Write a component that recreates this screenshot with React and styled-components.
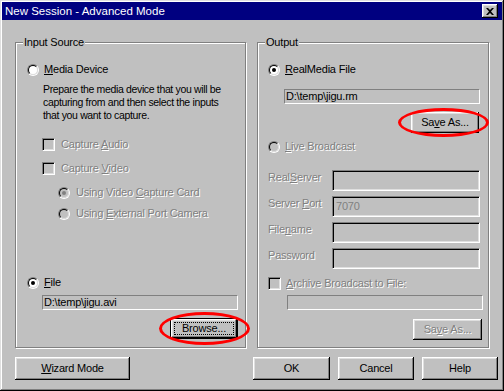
import React from "react";
import styled, { createGlobalStyle } from "styled-components";

const GlobalStyle = createGlobalStyle`
  html, body {
    margin: 0;
    padding: 0;
    background: #c0c0c0;
  }
  body {
    font-family: "Liberation Sans", Arial, sans-serif;
    font-size: 11px;
    letter-spacing: -0.2px;
  }
`;

const Window = styled.div`
  width: 504px;
  height: 391px;
  box-sizing: border-box;
  padding: 2px;
  background: #c0c0c0;
  color: #000;
  display: flex;
  flex-direction: column;
  box-shadow: inset -1px -1px #000, inset 1px 1px #dfdfdf,
    inset -2px -2px #808080, inset 2px 2px #fff;
`;

const TitleBar = styled.div`
  height: 18px;
  background: #000080;
  color: #fff;
  display: flex;
  align-items: center;
  justify-content: space-between;
  padding: 0 4px 0 3px;
  font-size: 11.5px;
  letter-spacing: 0;
`;

const CloseButton = styled.div`
  width: 16px;
  height: 14px;
  box-sizing: border-box;
  background: #c0c0c0;
  display: flex;
  align-items: center;
  justify-content: center;
  box-shadow: inset -1px -1px #000, inset 1px 1px #fff,
    inset -2px -2px #808080, inset 2px 2px #dfdfdf;
`;

const Content = styled.div`
  display: flex;
  gap: 11px;
  padding: 22px 0 0 13px;
`;

const Group = styled.div`
  position: relative;
  box-sizing: border-box;
  width: ${(p) => p.$w}px;
  height: 306px;
  border: 1px solid #808080;
  box-shadow: inset 1px 1px #fff, 1px 1px #fff;
  display: flex;
  flex-direction: column;
  padding: 0 ${(p) => p.$pr}px 0 ${(p) => p.$pl}px;
`;

const Legend = styled.span`
  position: absolute;
  top: -7px;
  left: 7px;
  padding: 0 1px;
  line-height: 13px;
  background: #c0c0c0;
`;

const OptionRow = styled.div`
  display: flex;
  align-items: center;
  gap: ${(p) => p.$gap ?? 5}px;
  height: 13px;
  line-height: 13px;
  white-space: nowrap;
  margin-top: ${(p) => p.$top}px;
  margin-left: ${(p) => p.$indent || 0}px;
`;

const Label = styled.span`
  color: ${(p) => (p.$disabled ? "#808080" : "#000")};
  text-shadow: ${(p) => (p.$disabled ? "1px 1px 0 #fff" : "none")};
`;

const Description = styled.p`
  margin: 7px 0 0 16px;
  line-height: 13px;
  font-size: 10.5px;
  letter-spacing: -0.35px;
  white-space: nowrap;
`;

const RadioOuter = styled.span`
  width: 12px;
  height: 12px;
  flex-shrink: 0;
  box-sizing: border-box;
  border-radius: 50%;
  border: 1px solid;
  border-color: #808080 #fff #fff #808080;
  display: flex;
`;

const RadioInner = styled.span`
  flex: 1;
  box-sizing: border-box;
  border-radius: 50%;
  border: 1px solid;
  border-color: #000 #dfdfdf #dfdfdf #000;
  background: ${(p) => (p.$disabled ? "#c0c0c0" : "#fff")};
  display: flex;
  align-items: center;
  justify-content: center;
`;

const RadioDot = styled.span`
  width: 4px;
  height: 4px;
  border-radius: 50%;
  background: ${(p) => (p.$disabled ? "#808080" : "#000")};
`;

const CheckBox = styled.span`
  width: 13px;
  height: 13px;
  flex-shrink: 0;
  box-sizing: border-box;
  border: 1px solid;
  border-color: #808080 #fff #fff #808080;
  box-shadow: inset 1px 1px #000, inset -1px -1px #dfdfdf;
  background: ${(p) => (p.$disabled ? "#c0c0c0" : "#fff")};
`;

const FlatField = styled.div`
  height: 15px;
  box-sizing: border-box;
  border: 1px solid;
  border-color: #808080 #fff #fff #808080;
  background: #c0c0c0;
  padding-left: 1px;
  line-height: 13px;
  white-space: nowrap;
  margin: ${(p) => p.$top}px ${(p) => p.$right || 0}px 0
    ${(p) => p.$indent || 0}px;
`;

const FieldRow = styled.div`
  display: flex;
  align-items: flex-start;
  height: 21px;
  margin-top: ${(p) => p.$top}px;
  margin-right: 3px;
`;

const FieldLabel = styled(Label)`
  width: 64px;
  flex-shrink: 0;
  padding-top: 1px;
  line-height: 13px;
  white-space: nowrap;
`;

const SunkenField = styled.div`
  flex: 1;
  height: 21px;
  box-sizing: border-box;
  border: 1px solid;
  border-color: #808080 #fff #fff #808080;
  box-shadow: inset 1px 1px #000, inset -1px -1px #dfdfdf;
  background: #c0c0c0;
  color: #808080;
  padding: 3px 0 0 3px;
  line-height: 13px;
`;

const ButtonSlot = styled.div`
  position: relative;
  align-self: flex-end;
  margin-top: ${(p) => p.$top}px;
  margin-right: ${(p) => p.$right || 0}px;
`;

const Button = styled.button`
  width: ${(p) => p.$w}px;
  height: ${(p) => p.$h || 23}px;
  box-sizing: border-box;
  margin: 0;
  padding: ${(p) => (p.$focused ? "3px" : "0")};
  font: inherit;
  letter-spacing: inherit;
  line-height: 13px;
  background: #c0c0c0;
  color: ${(p) => (p.disabled ? "#808080" : "#000")};
  text-shadow: ${(p) => (p.disabled ? "1px 1px 0 #fff" : "none")};
  border: ${(p) => (p.$focused ? "1px solid #000" : "none")};
  display: flex;
  align-items: center;
  justify-content: center;
  box-shadow: inset -1px -1px #000, inset 1px 1px #fff,
    inset -2px -2px #808080, inset 2px 2px #dfdfdf;
`;

const FocusRect = styled.span`
  flex: 1;
  align-self: stretch;
  display: flex;
  align-items: center;
  justify-content: center;
  border: 1px dotted #000;
`;

const Ellipse = styled.span`
  position: absolute;
  z-index: 2;
  top: ${(p) => p.$t}px;
  bottom: ${(p) => p.$b}px;
  left: ${(p) => p.$l}px;
  right: ${(p) => p.$r}px;
  border: 3px solid #ff0000;
  border-radius: 50%;
  pointer-events: none;
`;

const ButtonBar = styled.div`
  display: flex;
  justify-content: space-between;
  padding: 9px 4px 0 13px;
`;

const ButtonCluster = styled.div`
  display: flex;
  gap: 8px;
`;

function Radio({ checked, disabled }) {
  return (
    <RadioOuter>
      <RadioInner $disabled={disabled}>
        {checked && <RadioDot $disabled={disabled} />}
      </RadioInner>
    </RadioOuter>
  );
}

function App() {
  return (
    <>
      <GlobalStyle />
      <Window>
        <TitleBar>
          <span>New Session - Advanced Mode</span>
          <CloseButton>
            <svg width="8" height="7" viewBox="0 0 8 7">
              <path
                d="M0 0h2l2 2 2-2h2L5 3.5 8 7H6L4 5 2 7H0l3-3.5z"
                fill="#000"
              />
            </svg>
          </CloseButton>
        </TitleBar>

        <Content>
          <Group $w={231} $pl={11} $pr={7}>
            <Legend>Input Source</Legend>
            <OptionRow $top={20}>
              <Radio />
              <Label>
                <u>M</u>edia Device
              </Label>
            </OptionRow>
            <Description>
              Prepare the media device that you will be
              <br />
              capturing from and then select the inputs
              <br />
              that you want to capture.
            </Description>
            <OptionRow $top={16} $indent={15} $gap={6}>
              <CheckBox $disabled />
              <Label $disabled>
                Capture <u>A</u>udio
              </Label>
            </OptionRow>
            <OptionRow $top={11} $indent={15} $gap={6}>
              <CheckBox $disabled />
              <Label $disabled>
                Capture <u>V</u>ideo
              </Label>
            </OptionRow>
            <OptionRow $top={11} $indent={31} $gap={6}>
              <Radio checked disabled />
              <Label $disabled>
                Using Video <u>C</u>apture Card
              </Label>
            </OptionRow>
            <OptionRow $top={8} $indent={31} $gap={6}>
              <Radio disabled />
              <Label $disabled>
                Using <u>E</u>xternal Port Camera
              </Label>
            </OptionRow>
            <OptionRow $top={56}>
              <Radio checked />
              <Label>
                <u>F</u>ile
              </Label>
            </OptionRow>
            <FlatField $top={6} $indent={15}>
              D:\temp\jigu.avi
            </FlatField>
            <ButtonSlot $top={8}>
              <Button $w={68} $h={21} $focused>
                <FocusRect>Browse...</FocusRect>
              </Button>
              <Ellipse $t={-6} $b={-6} $l={-11} $r={-12} />
            </ButtonSlot>
          </Group>

          <Group $w={232} $pl={10} $pr={5}>
            <Legend>Output</Legend>
            <OptionRow $top={20}>
              <Radio checked />
              <Label>
                <u>R</u>ealMedia File
              </Label>
            </OptionRow>
            <FlatField $top={13} $indent={16} $right={3}>
              D:\temp\jigu.rm
            </FlatField>
            <ButtonSlot $top={8} $right={4}>
              <Button $w={68} $h={21}>
                Sa<u>v</u>e As...
              </Button>
              <Ellipse $t={-4} $b={-4} $l={-13} $r={-10} />
            </ButtonSlot>
            <OptionRow $top={7}>
              <Radio disabled />
              <Label $disabled>
                <u>L</u>ive Broadcast
              </Label>
            </OptionRow>
            <FieldRow $top={17}>
              <FieldLabel $disabled>
                Real<u>S</u>erver
              </FieldLabel>
              <SunkenField />
            </FieldRow>
            <FieldRow $top={5}>
              <FieldLabel $disabled>
                Server <u>P</u>ort
              </FieldLabel>
              <SunkenField>7070</SunkenField>
            </FieldRow>
            <FieldRow $top={5}>
              <FieldLabel $disabled>
                File<u>n</u>ame
              </FieldLabel>
              <SunkenField />
            </FieldRow>
            <FieldRow $top={5}>
              <FieldLabel $disabled>Password</FieldLabel>
              <SunkenField />
            </FieldRow>
            <OptionRow $top={8} $gap={5}>
              <CheckBox $disabled />
              <Label $disabled>
                <u>A</u>rchive Broadcast to File:
              </Label>
            </OptionRow>
            <FlatField $top={5} $indent={19} />
            <ButtonSlot $top={9} $right={1}>
              <Button $w={69} $h={21} disabled>
                Sa<u>v</u>e As...
              </Button>
            </ButtonSlot>
          </Group>
        </Content>

        <ButtonBar>
          <Button $w={115}>
            <u>W</u>izard Mode
          </Button>
          <ButtonCluster>
            <Button $w={77}>OK</Button>
            <Button $w={76}>Cancel</Button>
            <Button $w={76}>Help</Button>
          </ButtonCluster>
        </ButtonBar>
      </Window>
    </>
  );
}

export default App;
